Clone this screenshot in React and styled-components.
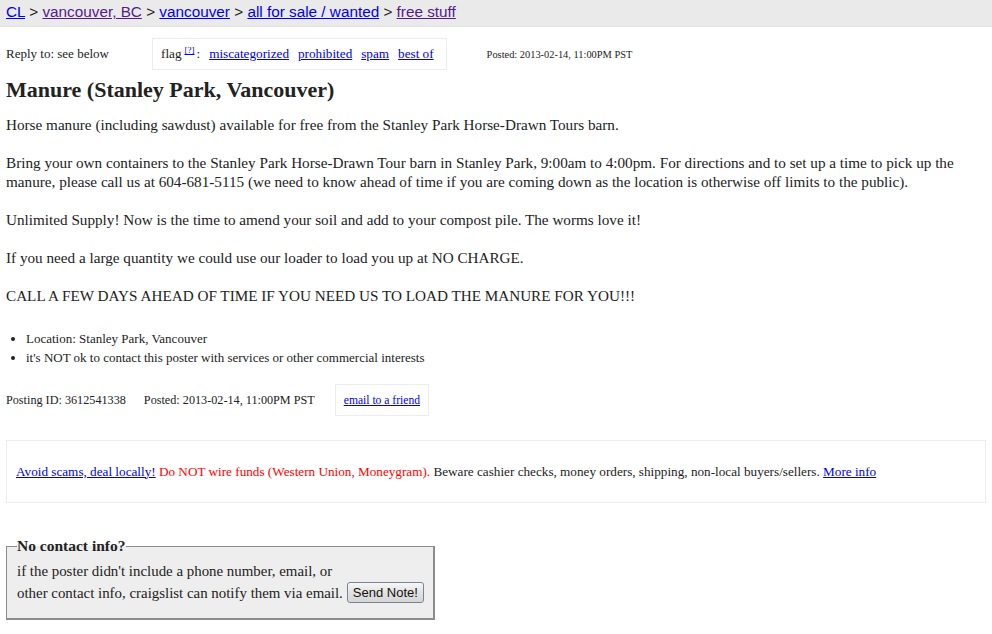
import React from "react";
import styled, { createGlobalStyle } from "styled-components";

const GlobalStyle = createGlobalStyle`
  html, body {
    margin: 0;
    padding: 0;
    background: #fff;
    font-family: "Liberation Serif", "Times New Roman", serif;
    color: #222;
  }
  a { color: #0000ee; }
`;

const Page = styled.div`
  width: 992px;
  min-height: 634px;
`;

const Breadcrumbs = styled.header`
  height: 26px;
  background: #eaeaea;
  border-bottom: 1px solid #e2e2e2;
  font-family: "Liberation Sans", Arial, sans-serif;
  font-size: 15.3px;
  line-height: 24px;
  padding: 0 6px;
  color: #222;
`;

const Crumb = styled.a`
  && {
    color: ${({ $visited }) => ($visited ? "#551a8b" : "#0000ee")};
  }
`;

const Content = styled.main`
  padding: 0 6px;
`;

const TopRow = styled.div`
  display: flex;
  align-items: center;
  height: 34px;
  margin-top: 10px;
  font-size: 13px;
`;

const ReplyTo = styled.div`
  width: 146px;
`;

const FlagBox = styled.div`
  border: 1px solid #ececec;
  height: 30px;
  padding: 0 12px 0 8px;
  display: flex;
  align-items: center;
  gap: 9px;
  font-size: 13.2px;
`;

const Sup = styled.sup`
  font-size: 9px;
  margin-left: 3px;
  margin-right: 2px;
`;

const PostedSmall = styled.div`
  font-size: 10.4px;
  margin-left: 40px;
`;

const Title = styled.h2`
  font-size: 22px;
  font-weight: bold;
  margin: 6px 0 12px;
  line-height: 26px;
`;

const Body = styled.section`
  font-size: 15.2px;
  line-height: 19px;
`;

const BulletList = styled.ul`
  margin: 24px 0 0;
  padding-left: 20px;
  font-size: 13px;
  line-height: 19px;
`;

const InfoRow = styled.div`
  display: flex;
  align-items: center;
  margin-top: 17px;
  font-size: 12.2px;
  height: 32px;
`;

const InfoItem = styled.span`
  margin-right: ${({ $gap }) => $gap}px;
`;

const LinkBox = styled.div`
  border: 1px solid #ececec;
  height: 30px;
  padding: 0 8px;
  display: flex;
  align-items: center;
  font-size: 11.6px;
`;

const ScamBox = styled.div`
  margin-top: 24px;
  border: 1px solid #ececec;
  height: 61px;
  padding: 0 9px;
  display: flex;
  align-items: center;
  font-size: 13.2px;
`;

const Red = styled.span`
  color: #ff0000;
`;

const ContactSet = styled.fieldset`
  margin: 32px 0 0;
  width: 406px;
  min-width: 0;
  background: #eeeeee;
  border: 2px solid #8c8c8c;
  border-top-width: 1px;
  border-left-width: 1px;
  padding: 3px 10px 14px;
  font-size: 14.9px;
  line-height: 22px;
`;

const Legend = styled.legend`
  font-weight: bold;
  font-size: 15.5px;
  padding: 0;
`;

const Line = styled.div`
  white-space: nowrap;
`;

const SendButton = styled.button`
  font-family: "Liberation Sans", Arial, sans-serif;
  font-size: 13px;
  height: 21px;
  padding: 0 5px;
  margin-left: 4px;
  border: 1px solid #7a8594;
  border-radius: 3px;
  background: linear-gradient(#f7f7f7, #e2e2e2 50%, #d6d6d6);
  color: #111;
  vertical-align: 1px;
`;

export default function App() {
  return (
    <Page>
      <GlobalStyle />
      <Breadcrumbs>
        <Crumb href="#">CL</Crumb> &gt; <Crumb href="#" $visited>vancouver, BC</Crumb> &gt;{" "}
        <Crumb href="#">vancouver</Crumb> &gt; <Crumb href="#">all for sale / wanted</Crumb> &gt;{" "}
        <Crumb href="#" $visited>free stuff</Crumb>
      </Breadcrumbs>
      <Content>
        <TopRow>
          <ReplyTo>Reply to: see below</ReplyTo>
          <FlagBox>
            <span>
              flag<Sup><a href="#">[?]</a></Sup>:
            </span>
            <a href="#">miscategorized</a>
            <a href="#">prohibited</a>
            <a href="#">spam</a>
            <a href="#">best of</a>
          </FlagBox>
          <PostedSmall>Posted: 2013-02-14, 11:00PM PST</PostedSmall>
        </TopRow>
        <Title>Manure (Stanley Park, Vancouver)</Title>
        <Body>
          Horse manure (including sawdust) available for free from the Stanley Park Horse-Drawn Tours barn.
          <br />
          <br />
          Bring your own containers to the Stanley Park Horse-Drawn Tour barn in Stanley Park, 9:00am to 4:00pm. For
          directions and to set up a time to pick up the manure, please call us at 604-681-5115 (we need to know ahead
          of time if you are coming down as the location is otherwise off limits to the public).
          <br />
          <br />
          Unlimited Supply! Now is the time to amend your soil and add to your compost pile. The worms love it!
          <br />
          <br />
          If you need a large quantity we could use our loader to load you up at NO CHARGE.
          <br />
          <br />
          CALL A FEW DAYS AHEAD OF TIME IF YOU NEED US TO LOAD THE MANURE FOR YOU!!!
        </Body>
        <BulletList>
          <li>Location: Stanley Park, Vancouver</li>
          <li>it's NOT ok to contact this poster with services or other commercial interests</li>
        </BulletList>
        <InfoRow>
          <InfoItem $gap={18}>Posting ID: 3612541338</InfoItem>
          <InfoItem $gap={20}>Posted: 2013-02-14, 11:00PM PST</InfoItem>
          <LinkBox>
            <a href="#">email to a friend</a>
          </LinkBox>
        </InfoRow>
        <ScamBox>
          <span>
            <a href="#">Avoid scams, deal locally!</a>{" "}
            <Red>Do NOT wire funds (Western Union, Moneygram).</Red> Beware cashier checks, money orders, shipping,
            non-local buyers/sellers. <a href="#">More info</a>
          </span>
        </ScamBox>
        <ContactSet>
          <Legend>No contact info?</Legend>
          <Line>if the poster didn't include a phone number, email, or</Line>
          <Line>
            other contact info, craigslist can notify them via email.
            <SendButton>Send Note!</SendButton>
          </Line>
        </ContactSet>
      </Content>
    </Page>
  );
}
